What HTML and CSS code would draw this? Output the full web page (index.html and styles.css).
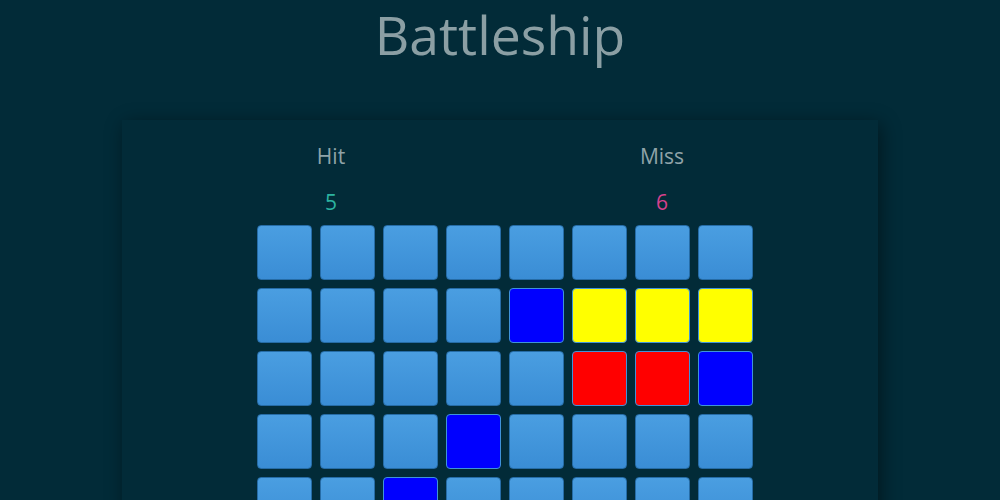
FILE: index.html
```html
<!DOCTYPE html>
<html>
<head>
<meta charset="utf-8">
<link rel="stylesheet" href="styles.css">
</head>
<body>
<h1 class="title">Battleship</h1>
<div class="card">
  <div class="stats">
    <div class="stat">
      <div class="stat-label">Hit</div>
      <div class="stat-value hit">5</div>
    </div>
    <div class="stat">
      <div class="stat-label">Miss</div>
      <div class="stat-value miss">6</div>
    </div>
  </div>
  <div class="board">
    <div class="cell"></div><div class="cell"></div><div class="cell"></div><div class="cell"></div><div class="cell"></div><div class="cell"></div><div class="cell"></div><div class="cell"></div>
    <div class="cell"></div><div class="cell"></div><div class="cell"></div><div class="cell"></div><div class="cell ship"></div><div class="cell miss-cell"></div><div class="cell miss-cell"></div><div class="cell miss-cell"></div>
    <div class="cell"></div><div class="cell"></div><div class="cell"></div><div class="cell"></div><div class="cell"></div><div class="cell hit-cell"></div><div class="cell hit-cell"></div><div class="cell ship"></div>
    <div class="cell"></div><div class="cell"></div><div class="cell"></div><div class="cell ship"></div><div class="cell"></div><div class="cell"></div><div class="cell"></div><div class="cell"></div>
    <div class="cell"></div><div class="cell"></div><div class="cell ship"></div><div class="cell"></div><div class="cell"></div><div class="cell"></div><div class="cell"></div><div class="cell"></div>
    <div class="cell"></div><div class="cell"></div><div class="cell"></div><div class="cell"></div><div class="cell"></div><div class="cell"></div><div class="cell"></div><div class="cell"></div>
  </div>
</div>
</body>
</html>
```
FILE: styles.css
```css
html, body {
  margin: 0;
  padding: 0;
  background: #022b38;
  font-family: "Open Sans", "Noto Sans", sans-serif;
  overflow: hidden;
}

.title {
  margin: 0;
  padding-top: 3px;
  text-align: center;
  font-size: 53.5px;
  font-weight: 400;
  line-height: 64px;
  color: #8b9fa4;
}

.card {
  width: 756px;
  margin: 53px auto 0;
  padding-top: 21px;
  padding-bottom: 40px;
  background: #022b38;
  box-shadow: 3px 4px 18px rgba(0, 0, 0, 0.45);
}

.stats {
  display: grid;
  grid-template-columns: 200px 200px;
  column-gap: 131px;
  padding-left: 109px;
}

.stat {
  display: flex;
  flex-direction: column;
  align-items: center;
  gap: 16px;
}

.stat-label {
  font-size: 21px;
  line-height: 30px;
  color: #8fa3a8;
}

.stat-value {
  font-size: 21px;
  line-height: 30px;
}

.stat-value.hit { color: #2cb3a0; }
.stat-value.miss { color: #d6418d; }

.board {
  margin-top: 8px;
  padding-left: 135px;
  display: grid;
  grid-template-columns: repeat(8, 55px);
  grid-auto-rows: 55px;
  gap: 8px;
}

.cell {
  box-sizing: border-box;
  border-radius: 4px;
  border: 1px solid #266ca6;
  background: linear-gradient(#4a9ee1, #3a8dd5);
}

.cell.ship {
  background: #0000ff;
  border-color: #3f93d9;
}

.cell.miss-cell {
  background: #ffff00;
  border-color: #3f93d9;
}

.cell.hit-cell {
  background: #ff0000;
  border-color: #3f93d9;
}
```
